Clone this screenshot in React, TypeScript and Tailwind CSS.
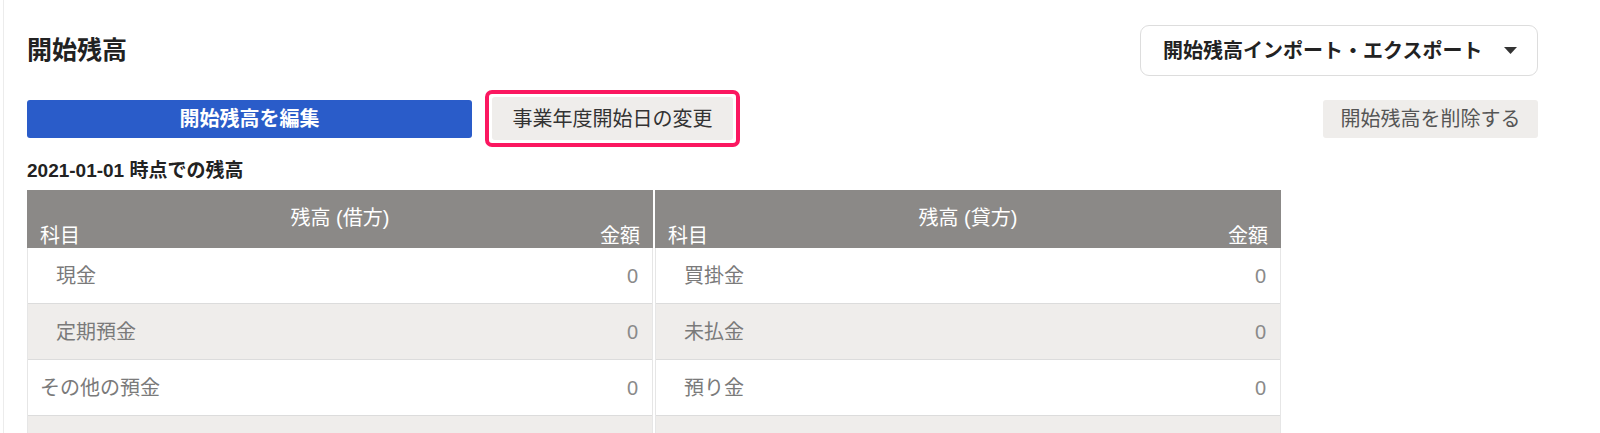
import React from "react"

type Row = { name: string; indent: boolean; amount: string }

const DEBIT: Row[] = [
  { name: "現金", indent: true, amount: "0" },
  { name: "定期預金", indent: true, amount: "0" },
  { name: "その他の預金", indent: false, amount: "0" },
]

const CREDIT: Row[] = [
  { name: "買掛金", indent: true, amount: "0" },
  { name: "未払金", indent: true, amount: "0" },
  { name: "預り金", indent: true, amount: "0" },
]

function BalanceTable({ title, rows }: { title: string; rows: Row[] }) {
  return (
    <div className="flex-1 min-w-0">
      {/* Header */}
      <div className="h-[58px] bg-[#8b8987] px-[13px] text-[20px] text-white">
        <div className="pt-[16px] text-center leading-[24px]">{title}</div>
        <div className="mt-[-6px] flex justify-between leading-[24px]">
          <span>科目</span>
          <span>金額</span>
        </div>
      </div>
      <ul className="border-x border-[#e6e6e6]">
        {rows.map((row, i) => (
          <li
            key={row.name}
            className={`flex h-[56px] items-center justify-between border-b border-[#dcdcdc] pr-[14px] text-[20px] text-[#7a7a7a] ${
              i % 2 === 1 ? "bg-[#efedeb]" : "bg-white"
            } ${row.indent ? "pl-[28px]" : "pl-[12px]"}`}
          >
            <span>{row.name}</span>
            <span className="text-[#8a8a8a]">{row.amount}</span>
          </li>
        ))}
        {/* next row, below the fold */}
        <li className="h-[56px] bg-[#efedeb]" />
      </ul>
    </div>
  )
}

export default function App() {
  return (
    <div className="min-h-screen bg-white font-['Liberation_Sans','Noto_Sans_CJK_JP',sans-serif] text-[#222]">
      <div className="ml-[3px] border-l border-[#ececec] pl-[23px] pr-[62px] pt-[25px]">
        {/* Title + import/export */}
        <div className="flex items-start justify-between">
          <h1 className="mt-[10px] text-[25px] font-bold leading-[31px]">開始残高</h1>
          <button className="flex h-[51px] w-[398px] items-center justify-between rounded-[9px] border border-[#dddddd] bg-white pl-[22px] pr-[20px] text-[20px] font-bold text-[#222]">
            <span>開始残高インポート・エクスポート</span>
            <svg width="13" height="8" viewBox="0 0 13 8" className="mt-[1px]">
              <path d="M0 0 H13 L6.5 7 Z" fill="#333" />
            </svg>
          </button>
        </div>

        {/* Actions */}
        <div className="mt-[14px] flex items-center">
          <button className="h-[38px] w-[445px] rounded-[3px] bg-[#2a5cc9] text-[20px] font-bold text-white">
            開始残高を編集
          </button>
          <div className="ml-[13px] rounded-[7px] border-[4px] border-[#fb1760] p-[3px]">
            <button className="h-[43px] w-[241px] rounded-[3px] bg-[#efedeb] text-[20px] text-[#333]">
              事業年度開始日の変更
            </button>
          </div>
          <button className="ml-auto h-[38px] w-[215px] rounded-[3px] bg-[#efedeb] text-[20px] text-[#555]">
            開始残高を削除する
          </button>
        </div>

        <p className="mt-[12px] text-[19px] font-bold leading-[24px] text-[#222]">2021-01-01 時点での残高</p>

        {/* Opening balances */}
        <div className="mt-[7px] flex w-[1254px] gap-[2px]">
          <BalanceTable title="残高 (借方)" rows={DEBIT} />
          <BalanceTable title="残高 (貸方)" rows={CREDIT} />
        </div>
      </div>
    </div>
  )
}
